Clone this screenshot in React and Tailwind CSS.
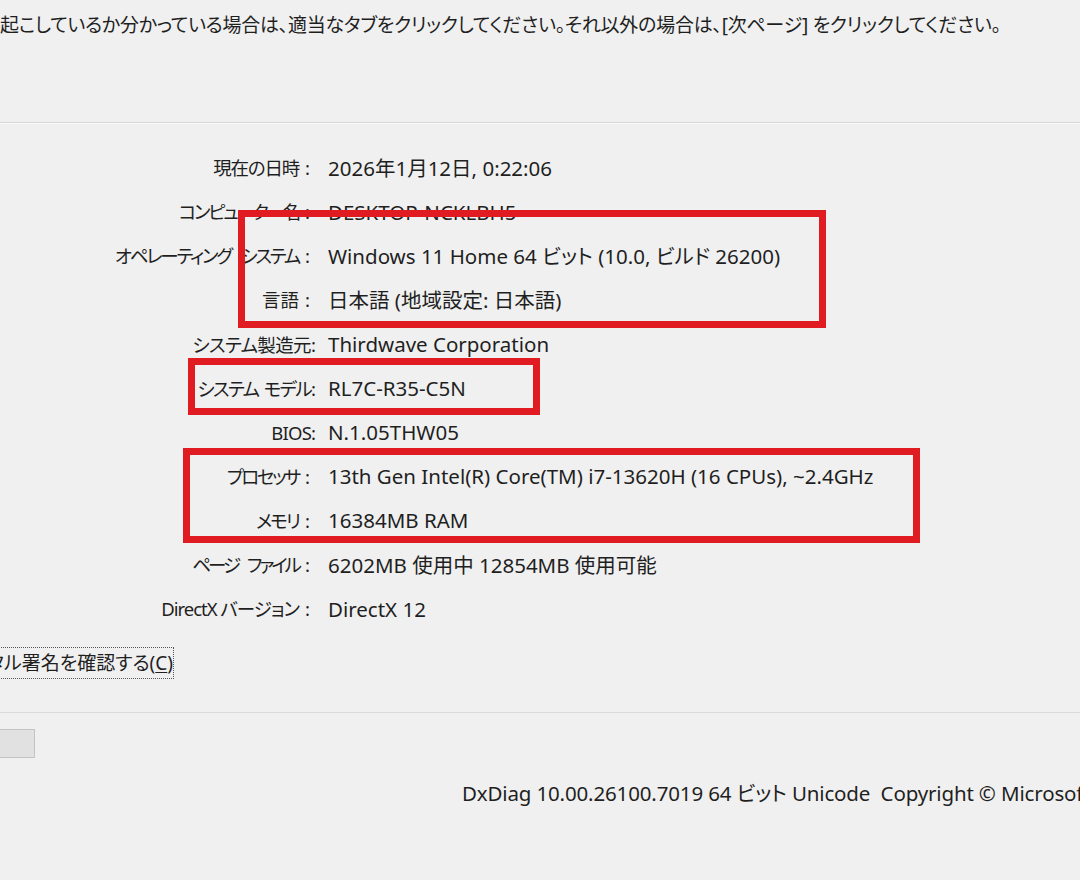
import React from 'react';

const rows = [
  { label: '現在の日時', wide: true, track: 'tracking-[-1.2px]', value: '2026年1月12日, 0:22:06' },
  { label: 'コンピューター名', wide: true, track: 'tracking-[-2.2px]', value: 'DESKTOP-NCKLBH5' },
  { label: 'オペレーティング システム', wide: true, track: 'tracking-[-2.2px] [word-spacing:7px]', value: 'Windows 11 Home 64 ビット (10.0, ビルド 26200)' },
  { label: '言語', wide: true, track: 'tracking-[0px]', value: '日本語 (地域設定: 日本語)' },
  { label: 'システム製造元', wide: false, track: 'tracking-[-0.6px]', value: 'Thirdwave Corporation' },
  { label: 'システム モデル', wide: false, track: 'tracking-[-1.6px] [word-spacing:2px]', value: 'RL7C-R35-C5N' },
  { label: 'BIOS', wide: false, track: 'tracking-[-0.8px]', value: 'N.1.05THW05' },
  { label: 'プロセッサ', wide: true, track: 'tracking-[-2.5px]', value: '13th Gen Intel(R) Core(TM) i7-13620H (16 CPUs), ~2.4GHz' },
  { label: 'メモリ', wide: true, track: 'tracking-[-2px]', value: '16384MB RAM' },
  { label: 'ページ ファイル', wide: true, track: 'tracking-[-3px] [word-spacing:7px]', value: '6202MB 使用中 12854MB 使用可能' },
  { label: 'DirectX バージョン', wide: true, track: 'tracking-[-1px]', value: 'DirectX 12' },
];

function InfoRow({ label, wide, track, value }) {
  return (
    <div className="flex h-[44.1px] items-center">
      <div className="w-[316px] flex justify-end whitespace-nowrap text-[18.5px]">
        <span className={track}>{label}</span>
        {wide ? (
          <span className="inline-block w-[17px] text-center">:</span>
        ) : (
          <span>:</span>
        )}
      </div>
      <div className="ml-[12px] whitespace-nowrap text-[20.5px]">{value}</div>
    </div>
  );
}

export default function App() {
  return (
    <div className="relative w-[1080px] h-[880px] overflow-hidden bg-[#f0f0f0] text-[#1f1f1f] text-[19px] font-['Noto_Sans','Noto_Sans_CJK_JP',sans-serif] [font-feature-settings:'palt']">
      {/* instructions */}
      <div className="h-[50px] flex items-center whitespace-nowrap tracking-[-0.25px]">
        起こしているか分かっている場合は、適当なタブをクリックしてください。それ以外の場合は、[次ページ] をクリックしてください。
      </div>

      <div className="mt-[72px] border-t border-[#d6d6d6]" />
      <div className="border-t border-[#fbfbfb]" />

      {/* system info */}
      <div className="mt-[22px] flex flex-col">
        {rows.map((r) => (
          <InfoRow key={r.label} {...r} />
        ))}
      </div>

      {/* WHQL checkbox label */}
      <div className="mt-[16px] w-[174px] flex justify-end">
        <div className="h-[32px] flex items-center whitespace-nowrap border border-dotted border-[#555] pl-[2px]">
          WHQL デジタル署名を確認する(<span className="underline underline-offset-2">C</span>)
        </div>
      </div>

      <div className="mt-[33px] border-t border-[#dadada]" />

      <div className="mt-[16px] -ml-[70px] w-[105px] h-[29px] bg-[#e1e1e1] border border-[#c4c4c4]" />

      <div className="mt-[23px] ml-[462px] h-[24px] flex items-center whitespace-nowrap text-[20.5px] tracking-[-0.15px]">
        DxDiag 10.00.26100.7019 64 ビット Unicode&nbsp; Copyright © Microsoft. All rights reserved.
      </div>

      {/* annotation boxes */}
      <div className="absolute left-[238px] top-[210px] w-[588px] h-[118px] border-[7px] border-[#e01b22]" />
      <div className="absolute left-[188px] top-[358px] w-[352px] h-[57px] border-[7px] border-[#e01b22]" />
      <div className="absolute left-[183px] top-[448px] w-[737px] h-[95px] border-[7px] border-[#e01b22]" />
    </div>
  );
}
